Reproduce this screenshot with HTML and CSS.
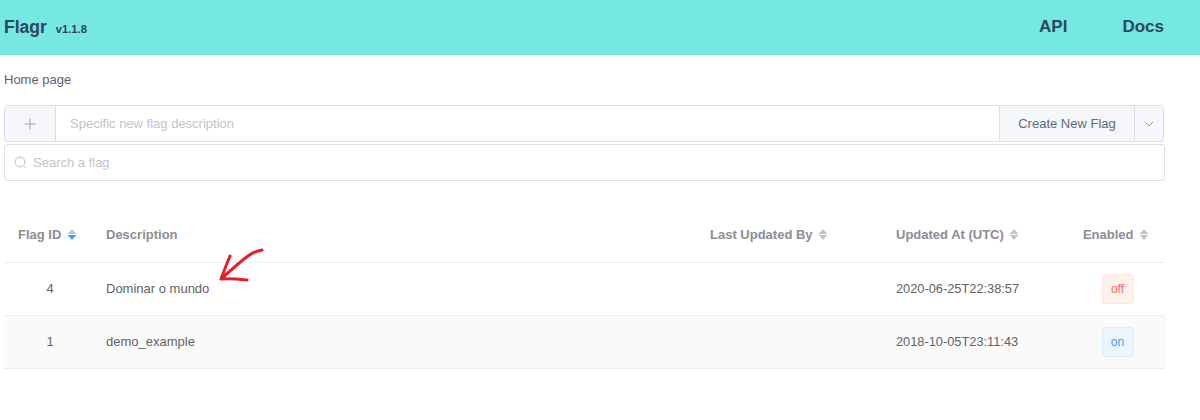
FILE: index.html
```html
<!DOCTYPE html>
<html lang="en">
<head>
  <meta charset="UTF-8" />
  <title>Flagr</title>
  <link rel="stylesheet" href="styles.css">
</head>
<body>
  <header class="navbar">
    <div class="brand">
      <span class="logo">Flagr</span>
      <span class="version">v1.1.8</span>
    </div>
    <nav class="nav-links">
      <a class="nav-link">API</a>
      <a class="nav-link">Docs</a>
    </nav>
  </header>

  <main class="page">
    <div class="crumb">Home page</div>

    <div class="create-row">
      <div class="plus-box">
        <svg width="12" height="12" viewBox="0 0 12 12"><path d="M6 .5v11M.5 6h11" stroke="#9aa0ab" stroke-width="1" fill="none"/></svg>
      </div>
      <div class="new-input">Specific new flag description</div>
      <div class="create-btn">Create New Flag</div>
      <div class="caret-btn">
        <svg width="10" height="6" viewBox="0 0 10 6"><path d="M1 1l4 4 4-4" stroke="#8d929c" stroke-width="1" fill="none"/></svg>
      </div>
    </div>

    <div class="search-row">
      <svg width="13" height="13" viewBox="0 0 13 13"><circle cx="6" cy="6" r="4.9" stroke="#bcc0c8" stroke-width="1" fill="none"/><path d="M9.6 9.6l2.6 2.6" stroke="#bcc0c8" stroke-width="1" fill="none"/></svg>
      <span>Search a flag</span>
    </div>

    <div class="flag-table">
      <div class="row head">
        <div class="cell c-id">Flag ID
          <svg class="sort" width="10" height="11" viewBox="0 0 10 11"><path d="M5 0l4.5 5h-9z" fill="#c0c4cc"/><path d="M5 11L.5 6h9z" fill="#409eff"/></svg>
        </div>
        <div class="cell c-desc">Description</div>
        <div class="cell c-by">Last Updated By
          <svg class="sort" width="10" height="11" viewBox="0 0 10 11"><path d="M5 0l4.5 5h-9z" fill="#c0c4cc"/><path d="M5 11L.5 6h9z" fill="#c0c4cc"/></svg>
        </div>
        <div class="cell c-at">Updated At (UTC)
          <svg class="sort" width="10" height="11" viewBox="0 0 10 11"><path d="M5 0l4.5 5h-9z" fill="#c0c4cc"/><path d="M5 11L.5 6h9z" fill="#c0c4cc"/></svg>
        </div>
        <div class="cell c-on">Enabled
          <svg class="sort" width="10" height="11" viewBox="0 0 10 11"><path d="M5 0l4.5 5h-9z" fill="#c0c4cc"/><path d="M5 11L.5 6h9z" fill="#c0c4cc"/></svg>
        </div>
      </div>
      <div class="row body">
        <div class="cell c-id">4</div>
        <div class="cell c-desc">Dominar o mundo</div>
        <div class="cell c-by"></div>
        <div class="cell c-at stamp">2020-06-25T22:38:57</div>
        <div class="cell c-on"><span class="tag off">off</span></div>
      </div>
      <div class="row body striped">
        <div class="cell c-id">1</div>
        <div class="cell c-desc">demo_example</div>
        <div class="cell c-by"></div>
        <div class="cell c-at stamp">2018-10-05T23:11:43</div>
        <div class="cell c-on"><span class="tag on">on</span></div>
      </div>
    </div>
  </main>

  <!-- hand drawn arrow on top of the screenshot -->
  <svg class="arrow" width="50" height="44" viewBox="0 0 50 44">
    <path d="M43 2C38 3 33 5 29 8C22 13 12 22 2 31M11 8C8 15 5 23 2 31C10 30 19 31 28 32" stroke="#ea1c24" stroke-width="3" stroke-linecap="round" stroke-linejoin="round" fill="none"/>
  </svg>
</body>
</html>
```

FILE: styles.css
```css
body {
  margin: 0;
  background: #fff;
  font-family: 'Liberation Sans', Arial, sans-serif;
  font-size: 13px;
  color: #5f6266;
}

.navbar {
  height: 55px;
  background: #74e8e1;
  color: #2e4560;
  font-weight: bold;
  display: flex;
  justify-content: space-between;
  align-items: center;
  padding: 0 36px 1px 4px;
  box-sizing: border-box;
}

.brand {
  display: flex;
  align-items: baseline;
  gap: 9px;
}

.logo {
  font-size: 17.5px;
}

.version {
  font-size: 11.2px;
}

.nav-links {
  display: flex;
  gap: 55px;
  font-size: 17px;
}

.page {
  width: 1161px;
  margin-left: 4px;
}

.crumb {
  padding-top: 18px;
  height: 32px;
  line-height: 14px;
}

.create-row {
  display: flex;
  height: 37px;
  width: 1160px;
  border: 1px solid #dcdfe6;
  border-radius: 3px;
  box-sizing: border-box;
  color: #5f6b7a;
}

.plus-box {
  width: 50px;
  background: #f5f7fa;
  border-right: 1px solid #dcdfe6;
  display: flex;
  align-items: center;
  justify-content: center;
}

.new-input {
  flex: 1;
  padding-left: 14px;
  line-height: 35px;
  color: #c0c4cc;
}

.create-btn {
  width: 136px;
  background: #f5f7fa;
  border-left: 1px solid #dcdfe6;
  border-right: 1px solid #dcdfe6;
  box-sizing: border-box;
  text-align: center;
  line-height: 35px;
}

.caret-btn {
  width: 28px;
  background: #f5f7fa;
  border-radius: 0 3px 3px 0;
  display: flex;
  align-items: center;
  justify-content: center;
}

.search-row {
  display: flex;
  align-items: center;
  gap: 6px;
  height: 37px;
  margin-top: 2px;
  padding-left: 9px;
  border: 1px solid #dcdfe6;
  border-radius: 3px;
  box-sizing: border-box;
  color: #c0c4cc;
}

.flag-table {
  margin-top: 28px;
}

.row {
  display: flex;
  height: 53px;
  box-sizing: border-box;
  border-bottom: 1px solid #ebeef5;
  align-items: center;
}

.row.body {
  padding-bottom: 2px;
}

.row.head {
  height: 54px;
  padding-bottom: 2px;
  font-weight: bold;
  color: #8b8e96;
}

.row.striped {
  background: #fafafa;
}

.cell {
  padding: 0 10px;
  box-sizing: border-box;
  white-space: nowrap;
}

.c-id {
  width: 92px;
  text-align: center;
}

.c-desc {
  width: 604px;
}

.c-by {
  width: 186px;
}

.c-at {
  width: 186px;
}

.c-at.stamp {
  font-size: 12.8px;
}

.c-on {
  width: 93px;
  text-align: center;
}

.sort {
  margin: 0 5px 0 2px;
  vertical-align: -1px;
}

.tag {
  display: inline-block;
  width: 32px;
  height: 30px;
  margin: 2px 2px 0 0;
  line-height: 28px;
  box-sizing: border-box;
  border: 1px solid;
  border-radius: 3px;
  font-size: 12px;
  text-align: center;
  vertical-align: middle;
}

.tag.off {
  color: #f56c6c;
  background: #fef0ea;
  border-color: #fde6dc;
}

.tag.on {
  color: #409eff;
  background: #ecf5ff;
  border-color: #d9ecff;
}

.arrow {
  position: absolute;
  left: 219px;
  top: 248px;
}
```
